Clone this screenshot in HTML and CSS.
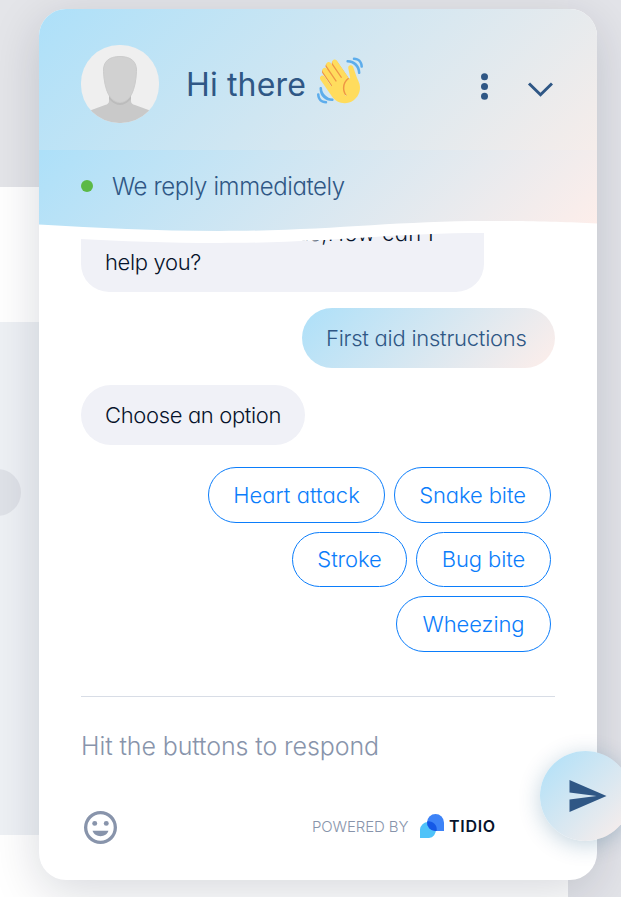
FILE: index.html
```html
<!DOCTYPE html>
<html lang="en">
<head>
<meta charset="utf-8">
<title>Chat</title>
<link rel="stylesheet" href="styles.css">
</head>
<body>
<div class="page">
  <div class="backdrop">
    <div class="band band-top"></div>
    <div class="band band-white"></div>
    <div class="band band-grey"><span class="blob"></span></div>
    <div class="band band-bottom"></div>
    <div class="rail"></div>
  </div>
  <main class="widget">
    <header class="header">
      <svg class="avatar" viewBox="0 0 78 78">
        <defs><clipPath id="round"><rect width="78" height="78" rx="38"/></clipPath></defs>
        <g clip-path="url(#round)">
          <path fill="#efefef" d="M0 0h78v78H0z"/>
          <path fill="#c9c9c9" d="M28 51v5q0 3-4 4L5 67v11h68V67l-19-7q-4-1-4-4v-5z"/>
          <path fill="#bcbcbc" d="M28 49l0 5q11 12 22 0v-5z"/>
          <path fill="#d1d1d1" stroke="#cbcbcb" d="M39 11.500c-11 0-17 5-16.500 15 .4 9 2 17 5 23 3 5 7 8 11.500 8s8.500-3 11.500-8c3-6 4.600-14 5-23 .5-10-5.500-15-16.500-15z"/>
        </g>
      </svg>
      <h1 class="title">Hi there</h1>
      <svg class="wave-hand" viewBox="0 0 36 36">
        <path fill="#EF9645" d="M4.861 9.147c.94-.657 2.357-.531 3.201.166l-.968-1.407c-.779-1.111-.5-2.313.612-3.093 1.112-.777 4.263 1.312 4.263 1.312-.786-1.122-.639-2.544.483-3.331 1.122-.784 2.67-.513 3.456.611l10.292 14.72L25 31l-12.245-6.442-8.377-12.027c-.779-1.111-.629-2.606.483-3.384z"/>
        <path fill="#FFDC5D" d="M2.695 17.336s-1.132-1.65.519-2.781c1.649-1.131 2.78.518 2.78.518l5.251 7.658c.181-.302.379-.6.6-.894L4.557 11.210s-1.131-1.649.519-2.780c1.649-1.131 2.780.518 2.780.518l6.855 9.997c.255-.208.516-.417.785-.622L7.549 6.732s-1.131-1.649.519-2.780c1.649-1.131 2.780.518 2.780.518l7.947 11.589c.292-.179.581-.334.871-.498L12.238 4.729s-1.131-1.649.518-2.780c1.649-1.131 2.780.518 2.780.518l7.854 11.454 1.194 1.742c-4.948 3.394-5.419 9.779-2.592 13.902.565.825 1.390.260 1.390.260-3.393-4.949-2.357-10.510 2.592-13.903L24.515 8.620s-.545-1.924 1.378-2.470c1.924-.545 2.470 1.379 2.470 1.379l1.685 5.004c.668 1.984 1.379 3.961 2.320 5.831 2.657 5.280 1.070 11.842-3.940 15.279-5.465 3.747-12.936 2.354-16.684-3.110L2.695 17.336z"/>
        <path fill="#5DADEC" d="M12 32.042C8 32.042 3.958 28 3.958 24c0-.553-.405-1-.958-1s-1.042.447-1.042 1C1.958 30 6 34.042 12 34.042c.553 0 1-.489 1-1.042s-.447-.958-1-.958zM7 34c-3 0-5-2-5-5 0-.553-.447-1-1-1s-1 .447-1 1c0 4 3 7 7 7 .553 0 1-.447 1-1s-.447-1-1-1zM24 2c-.552 0-1 .448-1 1s.448 1 1 1c4 0 8 3.589 8 8 0 .552.448 1 1 1s1-.448 1-1c0-5.514-4-10-10-10zM29 .042c-.552 0-1 .406-1 .958s.448 1.042 1 1.042c3 0 4.958 2.225 4.958 4.958 0 .552.489 1 1.042 1s.958-.448.958-1C35.958 3.163 33 .042 29 .042z"/>
      </svg>
      <svg class="dots" viewBox="0 0 8 28"><g fill="#2f5785"><circle cx="4.500" cy="3.700" r="3.500"/><circle cx="4.500" cy="13.500" r="3.500"/><circle cx="4.500" cy="23.300" r="3.500"/></g></svg>
      <svg class="chevron" viewBox="0 0 26 16"><path d="M2 1.500 13.500 12.700 25 1.500" fill="none" stroke="#2f5785" stroke-width="3"/></svg>
    </header>
    <div class="status">
      <span class="online"></span>
      <span class="status-text">We reply immediately</span>
      <svg class="curve" viewBox="0 0 558 30">
        <path fill="#fff" d="M0 6.500C60 10 115 13 180 13 290 13 350 3 450 3c50 0 75 1 108 2.500V30h-113V15C350 15 290 25 180 25 130 25 80 23 42 21V30H0z"/>
      </svg>
    </div>
    <section class="messages">
      <div class="bubble first"><span class="tail-line">us,How can I</span><span class="help">help you?</span></div>
      <div class="bubble mine"><span>First aid instructions</span></div>
      <div class="bubble ask"><span>Choose an option</span></div>
      <div class="options">
        <div class="row"><button class="heart">Heart attack</button><button class="snake">Snake bite</button></div>
        <div class="row"><button class="stroke">Stroke</button><button class="bug">Bug bite</button></div>
        <div class="row"><button class="wheeze">Wheezing</button></div>
      </div>
    </section>
    <footer class="footer">
      <div class="placeholder">Hit the buttons to respond</div>
      <div class="tools">
        <svg class="smile" viewBox="2 2 20 20" fill="#8894ab"><path d="M12 2a10 10 0 1 0 0 20 10 10 0 0 0 0-20zm0 18a8 8 0 1 1 0-16 8 8 0 0 1 0 16z"/><circle cx="8.500" cy="9.500" r="1.500"/><circle cx="15.500" cy="9.500" r="1.500"/><path d="M7.200 14h9.600c-.6 2-2.500 3.300-4.800 3.300S7.800 16 7.200 14z"/></svg>
        <span class="powered">POWERED BY</span>
        <svg class="logo" viewBox="0 0 24 24"><path fill="#4fc3f9" d="M0 24V15.500a8 8 0 1 1 9 8.500z"/><path fill="#3d83f7" d="M24 17V8.500A8.500 8.500 0 1 0 15.500 17z"/><path fill="#1558e6" d="M7.100 7.500a8 8 0 0 1 9.500 9.500h-1.100A8.500 8.500 0 0 1 7.100 7.500z"/></svg>
        <span class="brand">TIDIO</span>
      </div>
    </footer>
    <div class="send"><svg viewBox="0 0 37 32"><path fill="#2f5785" d="M0 0 37 16 0 32V19.500L27 16 0 12.500z"/></svg></div>
  </main>
</div>
</body>
</html>
```
FILE: styles.css
```css
* { box-sizing: border-box; }
body { margin: 0; font-family: Inter, Lato, sans-serif; font-feature-settings: "cv11"; }
.page { display: grid; width: 621px; height: 897px; overflow: hidden; }
.backdrop, .widget { grid-area: 1 / 1; }
.backdrop { display: grid; grid-template: 187px 135px 513px 62px / 568px 53px; }
.band { grid-column: 1; }
.band-top { background: #e4e5e9; }
.band-white, .band-bottom { background: #fff; }
.band-grey { background: #eef1f5; display: flex; align-items: flex-start; }
.blob { width: 47px; height: 47px; margin: 147px 0 0 -26px; border-radius: 50%; background: #dfe2e8; }
.rail { grid-column: 2; grid-row: 1 / 5; background: #e3e4e9; }
.widget { position: relative; display: flex; flex-direction: column; width: 558px; height: 871px; margin: 9px 0 0 39px; border-radius: 27px; background: #fff; box-shadow: 0 12px 50px rgba(0, 18, 46, .16); }
.header { display: flex; height: 141px; padding: 36px 0 0 42px; border-radius: 27px 27px 0 0; background: linear-gradient(135deg, #ade0f9, #f6edea); }
.avatar { width: 78px; height: 78px; }
.title { width: 131px; margin: 18px 0 0 27px; font-size: 32px; line-height: 44px; font-weight: 400; color: #2f5785; white-space: nowrap; letter-spacing: .15px; }
.wave-hand { width: 46px; height: 47px; margin-top: 12px; }
.dots { width: 8px; height: 28px; margin: 28px 0 0 117px; }
.chevron { width: 26px; height: 16px; margin: 37px 0 0 39px; }
.status { position: relative; display: flex; align-items: flex-start; height: 82px; flex: none; padding: 19px 0 0 42px; background: linear-gradient(135deg, #ade0f9, #feeeea); z-index: 1; }
.online { width: 12px; height: 12px; margin: 11px 19px 0 0; border-radius: 50%; background: #5cb947; }
.status-text { font-size: 24px; line-height: 36px; font-weight: 300; color: #2f5785; letter-spacing: -.4px; white-space: nowrap; }
.curve { position: absolute; left: 0; top: 68px; width: 558px; height: 30px; }
.messages { display: flex; flex-direction: column; height: 464px; margin-top: -15px; padding: 0 42px; }
.bubble { font-size: 22px; line-height: 30px; font-weight: 300; padding: 15px 24px; border-radius: 30px; background: #f0f1f7; color: #06132b; white-space: nowrap; letter-spacing: -.35px; }
.first { display: flex; flex-direction: column; width: 403px; height: 75px; padding: 1px 24px 15px; border-radius: 0 0 28px 28px; }
.tail-line { align-self: flex-end; margin-right: 26px; letter-spacing: .3px; }
.help { line-height: 28px; }
.mine { align-self: flex-end; width: 253px; height: 60px; margin-top: 16px; background: linear-gradient(135deg, #ade0f9, #feeeea); color: #2f5785; letter-spacing: -.25px; }
.ask { width: 224px; height: 60px; margin-top: 17px; }
.options { display: flex; flex-direction: column; gap: 9px; margin: 22px 4px 0 0; }
.row { display: flex; justify-content: flex-end; gap: 9px; }
.row button { height: 55.600px; padding: 0; border: 1px solid #0b7dfb; border-radius: 28px; background: #fff; color: #0b7dfb; font: 300 22px/30px Inter, Lato, sans-serif; font-feature-settings: "cv11"; letter-spacing: -.1px; white-space: nowrap; }
.row .heart { width: 177px; letter-spacing: .05px; }
.row .snake { width: 157px; }
.row .stroke { width: 115px; }
.row .bug { width: 135px; }
.row .wheeze { width: 155px; }
.footer { margin: 15px 42px 0; border-top: 1px solid #d8dde6; }
.placeholder { margin-top: 31px; font-size: 25px; line-height: 36px; font-weight: 300; color: #8894ab; letter-spacing: -.1px; white-space: nowrap; }
.tools { display: flex; align-items: center; height: 34px; margin: 46px 0 0 3px; }
.smile { width: 33px; height: 33px; }
.powered { width: 108px; margin-left: 195px; font-size: 15px; line-height: 20px; font-weight: 300; color: #8894ab; letter-spacing: -.1px; white-space: nowrap; }
.logo { width: 24px; height: 24px; margin-top: -2px; }
.brand { margin-left: 5px; font-size: 16px; line-height: 20px; font-weight: 600; color: #06132b; letter-spacing: .7px; margin-top: -2px; }
.send { position: absolute; left: 501px; top: 742px; display: flex; width: 91px; height: 90px; padding: 29px 0 0 29px; border-radius: 50%; background: linear-gradient(135deg, #ade0f9, #feeeea); box-shadow: 0 4px 22px rgba(0, 77, 120, .24); }
.send svg { width: 38px; height: 32px; }
```
